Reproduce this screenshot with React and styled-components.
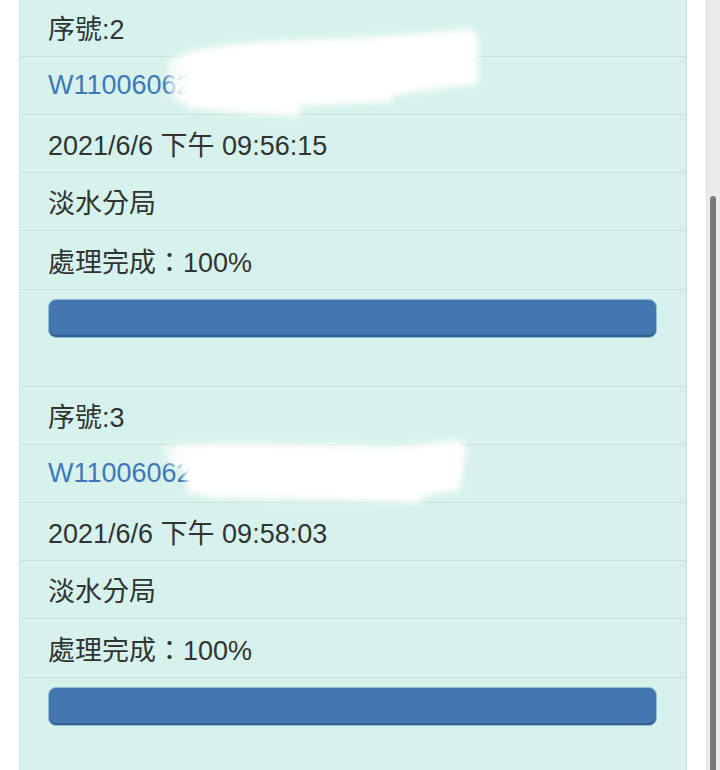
import React from "react";
import styled, { createGlobalStyle } from "styled-components";

const Global = createGlobalStyle`
  html, body { margin: 0; padding: 0; background: #ffffff; overflow: hidden; }
  body { font-family: "Liberation Sans", "Noto Sans CJK TC", sans-serif; }
`;

const Page = styled.div`
  display: flex;
  justify-content: space-between;
  width: 720px;
  height: 770px;
  overflow: hidden;
  position: relative;
`;

const Panel = styled.div`
  margin-left: 19px;
  width: 666px;
  margin-top: -1px;
  background: #d7f2ed;
  border-left: 1px solid #dde5e3;
  border-right: 1px solid #d2d6d5;
  height: 790px;
`;

const Row = styled.div`
  height: ${(p) => (p.$tall ? 58 : 57)}px;
  border-bottom: 1px solid #cbdfdb;
  display: flex;
  align-items: center;
  padding-left: 28px;
  font-size: 27px;
  color: ${(p) => (p.$link ? "#3f78b8" : "#303433")};
`;

const ProgressWrap = styled.div`
  padding: 9px 29px 48px 28px;
  border-bottom: 1px solid #cbdfdb;
`;

const Bar = styled.div`
  height: 39px;
  box-sizing: border-box;
  border-radius: 8px;
  background: #4477b0;
  border: 1px solid #8fc0d6;
  box-shadow: inset 0 -2px 0 rgba(20, 50, 90, 0.35);
`;

const Track = styled.div`
  width: 13px;
  height: 770px;
  background: #ebebeb;
  border-left: 1px solid #dcdcdc;
  display: flex;
  justify-content: center;
`;

const Thumb = styled.div`
  width: 6px;
  margin-top: 196px;
  margin-right: 2px;
  height: 600px;
  border-radius: 3px;
  background: #7a7a7a;
`;

const Smudge = styled.svg`
  position: absolute;
  left: 0;
  top: 0;
  pointer-events: none;
`;

const records = [
  { no: 2, time: "2021/6/6 下午 09:56:15" },
  { no: 3, time: "2021/6/6 下午 09:58:03" },
];

function Record({ r }) {
  return (
    <>
      <Row>序號:{r.no}</Row>
      <Row $link>W11006062</Row>
      <Row>{r.time}</Row>
      <Row>淡水分局</Row>
      <Row $tall>處理完成：100%</Row>
      <ProgressWrap>
        <Bar />
      </ProgressWrap>
    </>
  );
}

export default function App() {
  return (
    <>
      <Global />
      <Page>
        <Panel>
          {records.map((r) => (
            <Record key={r.no} r={r} />
          ))}
        </Panel>
        <Track>
          <Thumb />
        </Track>
        <Smudge width="720" height="770" viewBox="0 0 720 770">
          <defs>
            <filter id="soft" x="-10%" y="-30%" width="120%" height="160%">
              <feGaussianBlur stdDeviation="3" />
            </filter>
            <linearGradient id="fade" x1="0" x2="1" y1="0" y2="0">
              <stop offset="0" stopColor="#ffffff" stopOpacity="0.55" />
              <stop offset="0.07" stopColor="#ffffff" stopOpacity="1" />
              <stop offset="1" stopColor="#ffffff" stopOpacity="1" />
            </linearGradient>
          </defs>
          <g filter="url(#soft)" fill="url(#fade)">
            <path d="M166 62 C 190 45, 260 40, 360 38 L 470 29 L 478 36 L 478 84 L 440 88 L 392 96 L 392 102 L 300 106 L 300 117 L 240 113 L 190 108 L 170 96 Z" />
            <path d="M164 446 C 200 442, 300 444, 400 446 L 460 440 L 466 448 L 460 490 L 422 496 L 422 503 L 330 500 L 215 498 L 188 492 L 184 470 L 166 462 Z" />
          </g>
        </Smudge>
      </Page>
    </>
  );
}
